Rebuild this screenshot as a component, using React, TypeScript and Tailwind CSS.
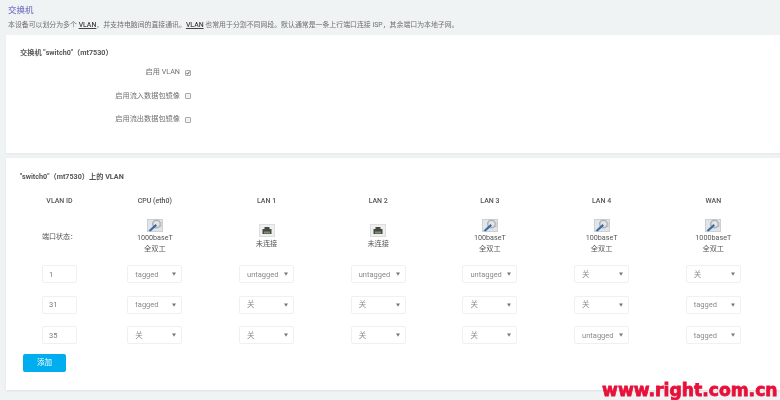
const font = { fontFamily: '"Roboto", "Noto Sans CJK SC", sans-serif' }

function PortUp() {
  return (
    <svg width="16" height="13" viewBox="0 0 16 13" className="block">
      <rect x="0.5" y="0.5" width="15" height="12" fill="#e2e5e8" stroke="#cdd0d3" />
      <circle cx="9.5" cy="5" r="3.8" fill="none" stroke="#aeb2b6" strokeWidth="1.5" />
      <rect x="13" y="3" width="1.4" height="5" fill="#babec2" />
      <path d="M1.5 11.5 L8.5 5 L10 6.8 L3.5 12.5 Z" fill="#3a6aa8" />
    </svg>
  )
}

function PortDown() {
  return (
    <svg width="16" height="13" viewBox="0 0 16 13" className="block">
      <rect x="0.5" y="0.5" width="15" height="12" fill="#eeefef" stroke="#dcdddd" />
      <path d="M3.5 10 V5 H5.5 V3 H10.5 V5 H12.5 V10 Z" fill="#454a42" />
      <rect x="5" y="7.5" width="6" height="2" fill="#7f8f6f" />
    </svg>
  )
}

function Port({ up, lines }: { up: boolean; lines: string[] }) {
  return (
    <div className="flex flex-col items-center text-[7.2px] leading-[10.5px] text-[#555]">
      <div className="mb-[1.5px]">{up ? <PortUp /> : <PortDown />}</div>
      {lines.map((l) => (
        <span key={l}>{l}</span>
      ))}
    </div>
  )
}

function FakeSelect({ value }: { value: string }) {
  return (
    <div className="flex h-[18px] w-[55px] items-center justify-between rounded-[2px] border border-[#f0f0f0] bg-white pr-[5px] pl-[7px] text-[7.5px] text-[#8a8a8a]">
      <span>{value}</span>
      <svg width="4" height="4" viewBox="0 0 4 4">
        <path d="M0 0.4 H4 L2 3.8 Z" fill="#777" />
      </svg>
    </div>
  )
}

function Check({ checked }: { checked?: boolean }) {
  return (
    <span className="flex h-[6px] w-[6px] items-center justify-center rounded-[1px] border border-[#aaa] bg-[#f3f3f3]">
      {checked && (
        <svg width="6" height="6" viewBox="0 0 6 6">
          <path d="M0.8 3 L2.4 4.8 L5.4 0.8" fill="none" stroke="#444" strokeWidth="1.2" />
        </svg>
      )}
    </span>
  )
}

const toggles = [
  { label: '启用 VLAN', checked: true },
  { label: '启用流入数据包镜像', checked: false },
  { label: '启用流出数据包镜像', checked: false },
]

const ports = [
  { name: 'CPU (eth0)', up: true, lines: ['1000baseT', '全双工'] },
  { name: 'LAN 1', up: false, lines: ['未连接'] },
  { name: 'LAN 2', up: false, lines: ['未连接'] },
  { name: 'LAN 3', up: true, lines: ['100baseT', '全双工'] },
  { name: 'LAN 4', up: true, lines: ['100baseT', '全双工'] },
  { name: 'WAN', up: true, lines: ['1000baseT', '全双工'] },
]

const vlans = [
  { id: '1', cells: ['tagged', 'untagged', 'untagged', 'untagged', '关', '关'] },
  { id: '31', cells: ['tagged', '关', '关', '关', '关', 'tagged'] },
  { id: '35', cells: ['关', '关', '关', '关', 'untagged', 'tagged'] },
]

export default function App() {
  return (
    <div style={font} className="relative h-[400px] w-[780px] overflow-hidden bg-[#eff3f4] blur-[0.3px]">
      <div className="px-[8px] pt-[4px]">
        <h2 className="text-[8.5px] leading-[12px] font-medium text-[#7a78c4]">交换机</h2>
        <p className="mt-[3px] text-[6.9px] leading-[12px] whitespace-nowrap text-[#707070]">
          本设备可以划分为多个 <span className="font-medium text-[#444] underline">VLAN</span>，并支持电脑间的直接通讯。
          <span className="font-medium text-[#444] underline">VLAN</span> 也常用于分割不同网段。默认通常是一条上行端口连接 ISP，其余端口为本地子网。
        </p>
      </div>

      <section className="mt-[4px] ml-[6px] h-[118px] bg-white pt-[12px] pl-[14px] shadow-[0_1px_2px_rgba(0,0,0,0.05)]">
        <h3 className="text-[7.2px] leading-[12px] font-bold text-[#555]">交换机 "switch0"（mt7530）</h3>
        <div className="mt-[8px] flex flex-col gap-[12.5px]">
          {toggles.map((t) => (
            <div key={t.label} className="flex h-[11px] items-center">
              <span className="w-[160px] text-right text-[7.2px] whitespace-nowrap text-[#707070]">{t.label}</span>
              <span className="ml-[5px]">
                <Check checked={t.checked} />
              </span>
            </div>
          ))}
        </div>
      </section>

      <section className="mt-[5px] ml-[6px] h-[232px] bg-white pt-[14px] pl-[14px] shadow-[0_1px_2px_rgba(0,0,0,0.08)]">
        <h3 className="text-[7.2px] leading-[10px] font-bold text-[#555]">"switch0"（mt7530）上的 VLAN</h3>

        <div className="mt-[14px] grid grid-cols-[79px_repeat(6,111.7px)] items-center text-[7px] text-[#555]">
          <div className="flex h-[10px] items-center justify-center font-medium">VLAN ID</div>
          {ports.map((p) => (
            <div key={p.name} className="flex h-[10px] items-center justify-center font-medium">
              {p.name}
            </div>
          ))}

          <div className="flex h-[53px] items-center justify-center pt-[9px] text-[#555]">端口状态：</div>
          {ports.map((p) => (
            <div key={p.name} className="flex h-[53px] items-center justify-center pt-[8px]">
              <Port up={p.up} lines={p.lines} />
            </div>
          ))}

          {vlans.map((v) => (
            <div key={v.id} className="contents">
              <div className="flex h-[30.5px] items-center justify-center">
                <div className="flex h-[18px] w-[35px] items-center rounded-[2px] border border-[#f0f0f0] pl-[6px] text-[7.5px] text-[#777]">
                  {v.id}
                </div>
              </div>
              {v.cells.map((c, i) => (
                <div key={i} className="flex h-[30.5px] items-center justify-center">
                  <FakeSelect value={c} />
                </div>
              ))}
            </div>
          ))}
        </div>

        <button className="mt-[3px] ml-[3px] flex h-[18px] w-[43px] items-center justify-center rounded-[2px] bg-[#00aeef] text-[7.5px] text-white">
          添加
        </button>
      </section>

      <div
        style={{ fontFamily: '"DejaVu Sans", sans-serif' }}
        className="absolute top-[381px] left-[602px] text-[17.2px] leading-[18px] font-bold whitespace-nowrap text-[#e8103a] [-webkit-text-stroke:0.8px_#e8103a]"
      >
        www.right.com.cn
      </div>
    </div>
  )
}
